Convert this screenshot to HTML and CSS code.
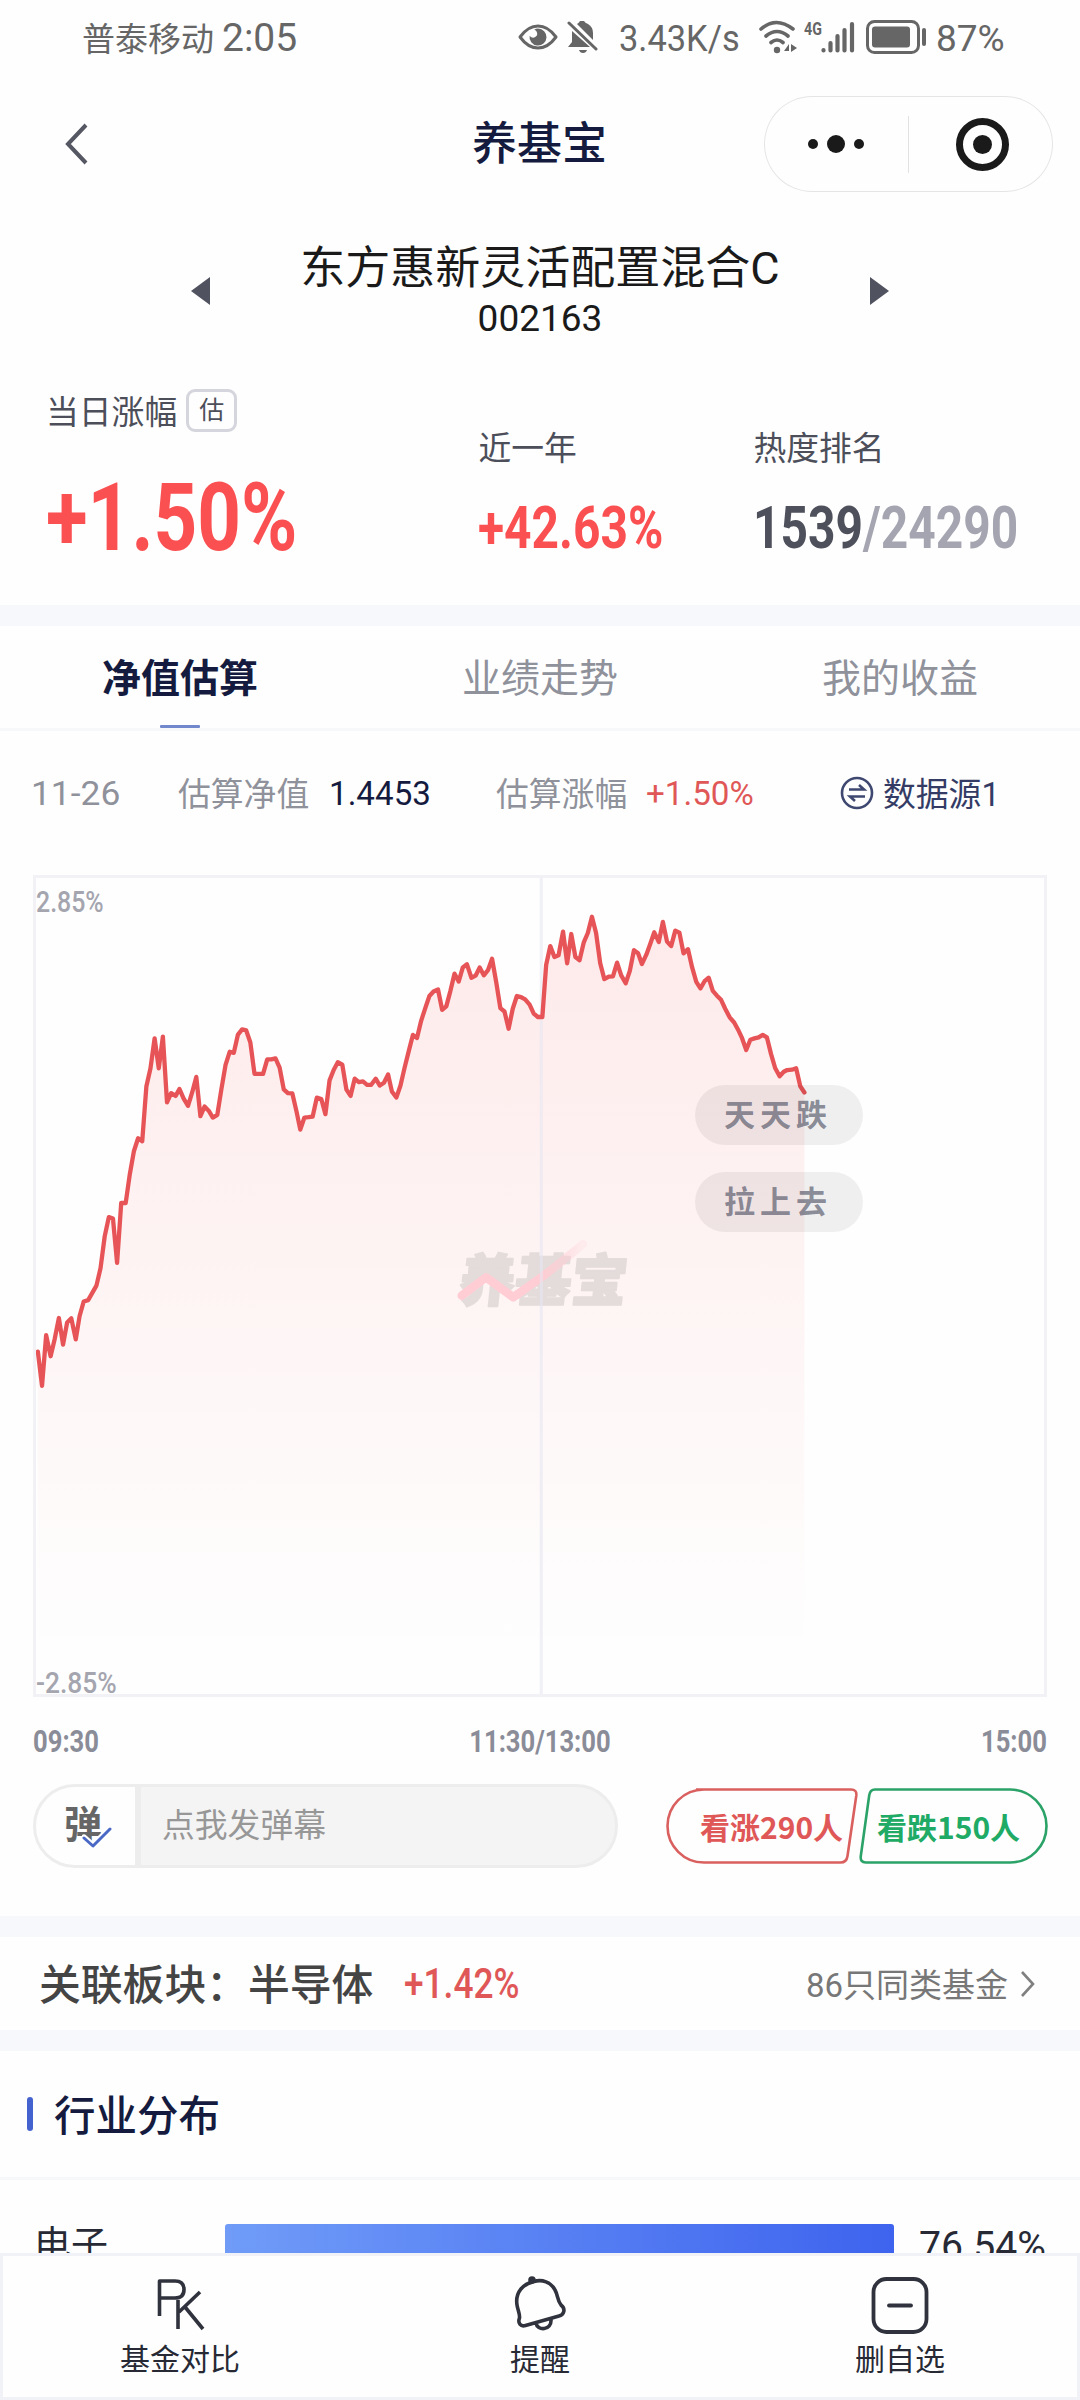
FILE: index.html
```html
<!DOCTYPE html>
<html lang="zh-CN">
<head>
<meta charset="utf-8">
<title>养基宝</title>
<link rel="stylesheet" href="styles.css">
</head>
<body>
<div class="app">
  <div class="status">
    <div class="status-left"><span class="carrier">普泰移动</span><span class="clock">2:05</span></div>
    <div class="status-right">
      <svg class="i-eye" width="40" height="28" viewBox="0 0 40 28" fill="none"><path d="M2 14Q10 3 20 3T38 14Q30 25 20 25T2 14Z" stroke="#666" stroke-width="3" stroke-linejoin="round"/><path d="M20 5.500a8.500 8.500 0 1 1-8.400 7.200q2.400 3 5.600 1.400 3-1.700 1.600-5-.6-1.900-2.600-2.300 1.800-1.300 3.800-1.300Z" fill="#666"/></svg>
      <svg class="i-mute" width="32" height="34" viewBox="0 0 32 34" fill="#666"><path d="M5 11 23 27H1l4-5ZM10 4q2-1 3-3h4q1 2 4 3 5 3 5 9v7ZM12 30h8q-1 3-4 3t-4-3Z"/><path d="M2 3 29 29" stroke="#666" stroke-width="3" stroke-linecap="round"/></svg>
      <span class="speed">3.43K/s</span>
      <svg class="i-wifi" width="40" height="34" viewBox="0 0 40 34" fill="none" stroke="#666" stroke-width="3.600" stroke-linecap="round"><path d="M3 9q15-13 32 0M8 16q11-9 22 0M13 22.500q6-5 12 0"/><circle cx="19" cy="30" r="3.200" fill="#666" stroke="none"/><path d="M31 24v7h-5ZM33 24l6 4-6 4Z" fill="#666" stroke="none"/></svg>
      <div class="signal"><span>4G</span>
        <svg width="34" height="32" viewBox="0 0 34 32" stroke="#666" stroke-width="4.200" stroke-linecap="round"><path d="M2.500 29v.500M9.500 22v7.500M16.500 15v14.500M23.500 9v20.500M31 3v26.500"/></svg></div>
      <svg class="i-batt" width="61" height="34" viewBox="0 0 61 34" fill="none"><rect x="1.500" y="1.500" width="51" height="31" rx="7" stroke="#666" stroke-width="3"/><rect x="6" y="6.500" width="38" height="21" rx="3" fill="#666"/><path d="M58 10v14" stroke="#666" stroke-width="4" stroke-linecap="round"/></svg>
      <span class="level">87%</span>
    </div>
  </div>

  <header class="nav">
    <svg class="back" width="26" height="42" viewBox="0 0 26 42" fill="none" stroke="#555763" stroke-width="4"><path d="M22 2 4 21l18 19"/></svg>
    <h1>养基宝</h1>
    <div class="capsule">
      <svg width="289" height="96" viewBox="0 0 289 96" fill="#1a1a1a"><circle cx="49" cy="48" r="5"/><circle cx="72" cy="48" r="9"/><circle cx="95" cy="48" r="5"/><path d="M144 20h1v57h-1z" fill="#e2e2e2"/><circle cx="218.500" cy="48.500" r="23" fill="none" stroke="#1a1a1a" stroke-width="7"/><circle cx="218.500" cy="48.500" r="9.500"/></svg>
    </div>
  </header>

  <section class="fund">
    <svg width="20" height="28" viewBox="0 0 20 28" fill="#50535f"><path d="M19 0v28L0 14Z"/></svg>
    <div class="fund-name"><h2>东方惠新灵活配置混合C</h2><p>002163</p></div>
    <svg width="20" height="28" viewBox="0 0 20 28" fill="#50535f"><path d="M1 0v28L20 14Z"/></svg>
  </section>

  <section class="stats">
    <div class="stat stat-day"><div class="label">当日涨幅<span class="badge">估</span></div><div class="value big up"><span class="din">+1.50%</span></div></div>
    <div class="stat stat-year"><div class="label">近一年</div><div class="value up"><span class="din">+42.63%</span></div></div>
    <div class="stat stat-rank"><div class="label">热度排名</div><div class="value"><span class="din">1539<i>/24290</i></span></div></div>
  </section>
  <div class="band"></div>

  <nav class="tabs"><span class="tab active">净值估算</span><span class="tab">业绩走势</span><span class="tab">我的收益</span></nav>

  <div class="info">
    <span class="c1"><b>11-26</b></span><span class="c2">估算净值</span><span class="c3 dark"><b>1.4453</b></span><span class="c4">估算涨幅</span><span class="c5 red"><b>+1.50%</b></span>
    <span class="source"><svg width="34" height="34" viewBox="0 0 34 34" fill="none" stroke="#3f4870" stroke-width="2.600"><circle cx="17" cy="17" r="15"/><path d="M9 13.500h15l-5-4.500M25 20.500H10l5 4.500"/></svg><em>数据源1</em></span>
  </div>

  <div class="chart">
    <svg class="plot" width="1014" height="822" viewBox="37.8 43.6 2944.700 2387" preserveAspectRatio="none">
      <defs>
        <linearGradient id="area" gradientUnits="userSpaceOnUse" x1="0" y1="165" x2="0" y2="2300"><stop offset="0" stop-color="#fb5052" stop-opacity=".115"/><stop offset="1" stop-color="#fb5052" stop-opacity="0"/></linearGradient>
        <linearGradient id="swoosh" gradientUnits="userSpaceOnUse" x1="20" y1="0" x2="142" y2="0"><stop offset=".65" stop-color="#ffcdd3"/><stop offset="1" stop-color="#ffcdd3" stop-opacity=".2"/></linearGradient>
      </defs>
      <path fill="url(#area)" d="M52 1428 64 1527 76 1380 89 1441 101 1390 113 1330 125 1407 137 1343 149 1331 162 1392 173 1325 185 1282 198 1278 210 1257 222 1236 234 1185 246 1093 258 1037 270 1041 282 1170 294 996 307 996 319 912 331 845 343 808 355 817 367 658 379 605 391 518 403 605 415 513 427 704 439 677 452 685 463 665 475 692 488 714 500 675 512 630 524 744 536 716 548 728 560 748 573 740 585 665 597 595 609 557 621 560 633 507 645 492 657 495 669 530 681 621 706 621 718 579 730 579 742 576 754 603 766 666 778 677 791 678 803 730 814 783 826 748 838 747 850 745 862 690 875 694 887 738 899 640 911 610 923 587 936 594 948 667 960 685 972 635 984 645 996 643 1008 653 1020 653 1033 635 1045 655 1057 647 1069 623 1080 672 1093 690 1105 655 1117 603 1129 555 1141 508 1153 517 1165 467 1177 430 1189 395 1201 382 1214 376 1226 435 1238 425 1250 380 1262 330 1274 353 1286 312 1298 303 1311 342 1323 336 1335 312 1347 335 1359 320 1371 287 1383 355 1395 430 1407 440 1419 490 1431 432 1443 395 1455 398 1467 405 1480 420 1492 446 1504 456 1517 456 1528 305 1540 250 1552 282 1564 277 1577 208 1589 300 1601 215 1613 282 1625 291 1637 240 1649 212 1661 165 1673 212 1685 300 1697 346 1710 339 1722 338 1734 298 1746 335 1759 358 1771 322 1783 262 1795 271 1806 302 1819 275 1831 242 1842 210 1855 238 1867 180 1879 237 1891 250 1903 205 1915 211 1927 271 1940 259 1952 312 1964 354 1976 373 1988 352 2000 342 2012 380 2024 394 2036 406 2048 432 2061 457 2074 472 2085 492 2096 515 2109 552 2121 522 2133 518 2145 515 2157 508 2169 515 2181 563 2193 604 2206 628 2218 615 2228 610 2242 609 2254 605 2266 657 2278 675V2425H52Z"/>
      <g transform="translate(1219.700 1045.400) scale(2.904)">
        <text class="mark" x="17" y="81" transform="skewX(-6) translate(9 0)">养基宝</text>
        <path d="M21.700 75.700 46 57.300l27.300 20L107 53.300l36-29" fill="none" stroke="url(#swoosh)" stroke-width="8.500" stroke-linecap="round" stroke-linejoin="round"/>
      </g>
      <path d="M1514 44V2430" stroke="#e6e6f2" stroke-opacity=".6" stroke-width="9"/>
      <path fill="none" stroke="#e75457" stroke-width="12.500" stroke-linecap="round" stroke-linejoin="round" d="M52 1428 64 1527 76 1380 89 1441 101 1390 113 1330 125 1407 137 1343 149 1331 162 1392 173 1325 185 1282 198 1278 210 1257 222 1236 234 1185 246 1093 258 1037 270 1041 282 1170 294 996 307 996 319 912 331 845 343 808 355 817 367 658 379 605 391 518 403 605 415 513 427 704 439 677 452 685 463 665 475 692 488 714 500 675 512 630 524 744 536 716 548 728 560 748 573 740 585 665 597 595 609 557 621 560 633 507 645 492 657 495 669 530 681 621 706 621 718 579 730 579 742 576 754 603 766 666 778 677 791 678 803 730 814 783 826 748 838 747 850 745 862 690 875 694 887 738 899 640 911 610 923 587 936 594 948 667 960 685 972 635 984 645 996 643 1008 653 1020 653 1033 635 1045 655 1057 647 1069 623 1080 672 1093 690 1105 655 1117 603 1129 555 1141 508 1153 517 1165 467 1177 430 1189 395 1201 382 1214 376 1226 435 1238 425 1250 380 1262 330 1274 353 1286 312 1298 303 1311 342 1323 336 1335 312 1347 335 1359 320 1371 287 1383 355 1395 430 1407 440 1419 490 1431 432 1443 395 1455 398 1467 405 1480 420 1492 446 1504 456 1517 456 1528 305 1540 250 1552 282 1564 277 1577 208 1589 300 1601 215 1613 282 1625 291 1637 240 1649 212 1661 165 1673 212 1685 300 1697 346 1710 339 1722 338 1734 298 1746 335 1759 358 1771 322 1783 262 1795 271 1806 302 1819 275 1831 242 1842 210 1855 238 1867 180 1879 237 1891 250 1903 205 1915 211 1927 271 1940 259 1952 312 1964 354 1976 373 1988 352 2000 342 2012 380 2024 394 2036 406 2048 432 2061 457 2074 472 2085 492 2096 515 2109 552 2121 522 2133 518 2145 515 2157 508 2169 515 2181 563 2193 604 2206 628 2218 615 2228 610 2242 609 2254 605 2266 657 2278 675"/>
    </svg>
    <span class="y-label y-top">2.85%</span>
    <span class="y-label y-bottom">-2.85%</span>
    <span class="bullet bullet-1">天天跌</span>
    <span class="bullet bullet-2">拉上去</span>
  </div>
  <div class="x-axis"><span>09:30</span><span>11:30/13:00</span><span>15:00</span></div>

  <div class="actions">
    <div class="danmu">
      <div class="danmu-icon">弹<svg width="30" height="22" viewBox="0 0 30 22" fill="none" stroke-linecap="round" stroke-linejoin="round"><path d="M2 11l9 8L28 2" stroke="#fff" stroke-width="7"/><path d="M2 11l9 8L28 2" stroke="#4a68c6" stroke-width="3"/></svg></div>
      <div class="danmu-input">点我发弹幕</div>
    </div>
    <div class="votes">
      <svg width="382" height="76" viewBox="0 0 382 76" fill="none" stroke-width="2.600"><path d="M30 1.500H185q6 0 5.300 6L181.500 68q-.9 6.500-7 6.500H38A36.500 36.500 0 0 1 38 1.500Z" stroke="#d9605f"/><path d="M344 1.500H209q-5 0-5.800 6L194.800 68q-.8 6.500 5 6.500H344A36.500 36.500 0 0 0 344 1.500Z" stroke="#2ba368"/></svg>
      <span class="vote red">看涨290人</span><span class="vote green">看跌150人</span>
    </div>
  </div>
  <div class="band"></div>

  <section class="related">
    <span class="related-name">关联板块：半导体</span><span class="related-val red"><b>+1.42%</b></span>
    <span class="related-more">86只同类基金</span>
    <svg width="16" height="28" viewBox="0 0 16 28" fill="none" stroke="#808080" stroke-width="2.600"><path d="M2 2l11 12L2 26"/></svg>
  </section>
  <div class="band"></div>

  <section class="industry">
    <h3><span>行业分布</span></h3>
    <div class="industry-row"><span class="ind-name">电子</span><span class="ind-bar"></span><span class="ind-val">76.54%</span></div>
  </section>

  <footer class="toolbar">
    <div class="tool"><svg width="60" height="58" viewBox="0 0 60 58" fill="none" stroke="#30333d" stroke-width="3.600" stroke-linejoin="round"><path d="M9.500 40V5H25q9 0 9 8.500T25 22H9.500M28 24v29M50 16 29 36M35 31l18 22"/></svg>基金对比</div>
    <div class="tool"><svg width="60" height="58" viewBox="0 0 60 58" fill="none" stroke="#30333d" stroke-width="3.600" stroke-linejoin="round"><path d="M24 5.500C13 8 5 16 7 29c1 6 3 9 2.500 13-2 5 1 9 6 7.500L49 40c5-1 7-7 2-11-4-5-3-10-6-15C41 6 32 3 24 5.500ZM26 47c1 8 16 8 15-4"/><circle cx="22" cy="4" r="2" fill="#30333d"/></svg>提醒</div>
    <div class="tool"><svg width="60" height="58" viewBox="0 0 60 58" fill="none" stroke="#30333d" stroke-width="3.800" stroke-linecap="round"><rect x="3.500" y="3" width="53" height="53" rx="13"/><path d="M19 29.500h22"/></svg>删自选</div>
  </footer>
</div>
</body>
</html>
```
FILE: styles.css
```css
* { box-sizing: border-box; margin: 0; padding: 0; }
body {
  width: 1080px; height: 2400px; overflow: hidden; background: #fefefe;
  font-family: Roboto, "Noto Sans CJK SC", sans-serif; color: #272a35;
}
h1, h2, h3, b, i, em { font-weight: inherit; font-style: normal; }
svg { display: block; flex: none; }
span { white-space: nowrap; }
.app { display: flex; flex-direction: column; height: 2400px; }
.red { color: #e05757; }
.green { color: #1fab66; }

.status { height: 74px; display: flex; justify-content: space-between; padding: 0 75px 0 82px; color: #666; }
.status-left, .status-right { display: flex; align-items: center; }
.carrier { font-size: 33px; width: 140px; }
.clock { font-size: 39px; margin-top: 2px; }
.speed { font-size: 37px; width: 119px; margin: 3px 20px 0 20px; transform: scaleX(.93); transform-origin: left; }
.i-mute { margin: 0 0 0 9px; }
.signal { display: flex; margin-left: 6px; }
.signal span { font-size: 19px; font-weight: 700; line-height: 15px; width: 17px; transform: scaleX(.75); transform-origin: left; }
.i-batt { margin-left: 11px; }
.level { font-size: 37px; width: 69px; margin: 3px 0 0 9px; }

.nav { height: 142px; display: flex; align-items: center; justify-content: space-between; padding: 0 27px 2px 64px; }
.nav h1 { font-size: 45px; font-weight: 500; color: #141b3f; margin: 0 -43px 7px 0; }
.back { margin-right: 182px; }
.capsule { width: 289px; height: 96px; border-radius: 48px; box-shadow: inset 0 0 0 1px #e5e5e5; }

.fund { height: 148px; display: flex; justify-content: space-between; padding: 21px 191px 0; }
.fund > svg { margin-top: 40px; }
.fund-name { text-align: center; color: #1a1a1a; }
.fund-name h2 { font-size: 45px; line-height: 64px; }
.fund-name p { font-size: 37px; line-height: 35px; }

.stats { height: 241px; display: flex; padding-left: 46px; }
.stat { padding-top: 55px; }
.stat-day { width: 434px; padding-top: 19px; }
.stat-year { width: 276px; }
.label { display: flex; align-items: center; height: 52px; font-size: 32.800px; color: #4c4f5a; }
.badge { width: 51px; height: 43px; margin: 2px 0 0 9px; border: 3px solid #d5d5dd; border-radius: 9px; font-size: 25px; line-height: 38px; text-align: center; }
.value { font-size: 59px; font-weight: 700; height: 60px; line-height: 60px; margin-top: 27px; color: #4e515c; }
.value i { color: #a4a5b0; }
.up { color: #fb5052; }
.value.big { font-size: 94px; height: 94px; line-height: 94px; margin-top: 36px; }
.din { display: inline-block; transform: scaleX(.812); transform-origin: left; }

.band { height: 21px; background: #f6f8fc; flex: none; }

.tabs { height: 105px; display: flex; border-bottom: 3px solid #f7f8f9; }
.tab { flex: 1; position: relative; text-align: center; font-size: 39px; line-height: 107px; height: 102px; color: #8f919b; }
.tab.active { font-weight: 700; color: #141b3f; }
.tab.active::after { content: ""; position: absolute; left: 160px; bottom: 0; width: 40px; height: 3px; background: #7288cc; border-radius: 1px; }

.info { height: 144px; display: flex; align-items: center; padding: 0 0 20px 31px; font-size: 34px; color: #8f919b; }
.info .c1 { width: 147px; }
.info .c1 b { transform: scaleX(1.04); }
.info .c2, .info .c4, .source { font-size: 32.800px; }
.info .c2, .info .c4, .source em { margin-top: -3px; }
.info .c2 { width: 151px; }
.info .c3 { width: 167px; }
.info .c4 { width: 150px; }
.info .c5 { width: 194px; }
.info b { display: inline-block; transform: scaleX(.975); transform-origin: left; }
.dark { color: #141b3f; }
.source { display: flex; align-items: center; gap: 9px; color: #343c66; }

.chart { position: relative; width: 1014px; height: 822px; margin-left: 33px; flex: none; }
.chart::after { content: ""; position: absolute; inset: 0; border: 3px solid #f1f1f6; }
.mark { font-size: 56px; font-weight: 900; fill: #e4dbdb; stroke: #e4dbdb; stroke-width: 2; stroke-linejoin: round; }
.y-label { position: absolute; left: 3px; font-size: 30px; line-height: 30px; font-weight: 500; color: #a4a5ae; transform: scaleX(.83); transform-origin: left; }
.y-top { top: 12px; }
.y-bottom { bottom: -1px; transform: scaleX(.88); }
.bullet { position: absolute; left: 662px; width: 168px; height: 60px; border-radius: 30px; padding-left: 29px; background: rgba(0,0,0,.06); color: rgba(60,65,85,.58); font-size: 31px; line-height: 62px; font-weight: 700; letter-spacing: 5px; }
.bullet-1 { top: 210px; }
.bullet-2 { top: 297px; }

.x-axis { height: 87px; display: flex; justify-content: space-between; padding: 25px 33px 0; font-size: 32px; font-weight: 700; color: #8a8c98; }
.x-axis span { transform: scaleX(.8); width: 33.33%; }
.x-axis span:first-child { transform-origin: left; }
.x-axis span:nth-child(2) { text-align: center; }
.x-axis span:last-child { transform-origin: right; text-align: right; }

.actions { height: 132px; display: flex; justify-content: space-between; padding: 0 33px; }
.danmu { width: 585px; height: 84px; display: flex; border: 3px solid #ededed; border-radius: 43px; overflow: hidden; background: #f4f4f4; }
.danmu-icon { position: relative; width: 105px; background: #fefefe; border-right: 6px solid #ededed; padding-left: 28px; font-size: 38px; line-height: 76px; font-weight: 700; color: #666; }
.danmu-icon svg { position: absolute; left: 46px; top: 40px; }
.danmu-input { padding-left: 21px; font-size: 32.800px; line-height: 79px; color: #979797; }
.votes { position: relative; width: 381px; height: 76px; margin-top: 4px; display: flex; gap: 34px; padding-left: 34px; }
.votes svg { position: absolute; left: 0; top: 0; }
.vote { width: 143px; font-family: "Noto Sans CJK SC", sans-serif; font-size: 30px; font-weight: 700; line-height: 76px; }

.related { height: 93px; display: flex; align-items: center; padding: 0 44px 0 39px; font-size: 41.800px; font-weight: 500; color: #444; }
.related-name { margin-top: -3px; }
.related-val { margin: -1px 0 0 31px; width: 114px; font-size: 43px; }
.related-val b { display: inline-block; transform: scaleX(.82); transform-origin: left; }
.related-more { margin: -2px 12px 0 auto; font-size: 33px; font-weight: 400; color: #777; }

.industry { height: 202px; }
.industry h3 { display: flex; align-items: center; height: 129px; padding-left: 27px; border-bottom: 3px solid #f7f8fa; font-size: 41.500px; font-weight: 500; color: #141b3f; }
.industry h3::before { content: ""; width: 6px; height: 34px; border-radius: 3px; background: #4463cf; margin-right: 21px; }
.industry h3 span { margin-top: -3px; }
.industry-row { height: 73px; display: flex; overflow: hidden; padding: 44px 33px 0 34px; font-size: 37px; line-height: 44px; }
.ind-name { width: 191px; }
.ind-bar { width: 669px; height: 44px; border-radius: 3px; background: linear-gradient(90deg, #709cf8, #3e63ee); }
.ind-val { margin-left: 25px; font-size: 38px; transform: scaleX(1.03); transform-origin: left; }

.toolbar { height: 147px; flex: none; display: flex; box-shadow: inset 0 0 0 3px #f1f2f7; background: #fefefe; }
.tool { flex: 1; display: flex; flex-direction: column; align-items: center; padding-top: 23px; font-size: 30px; line-height: 51px; }
```
